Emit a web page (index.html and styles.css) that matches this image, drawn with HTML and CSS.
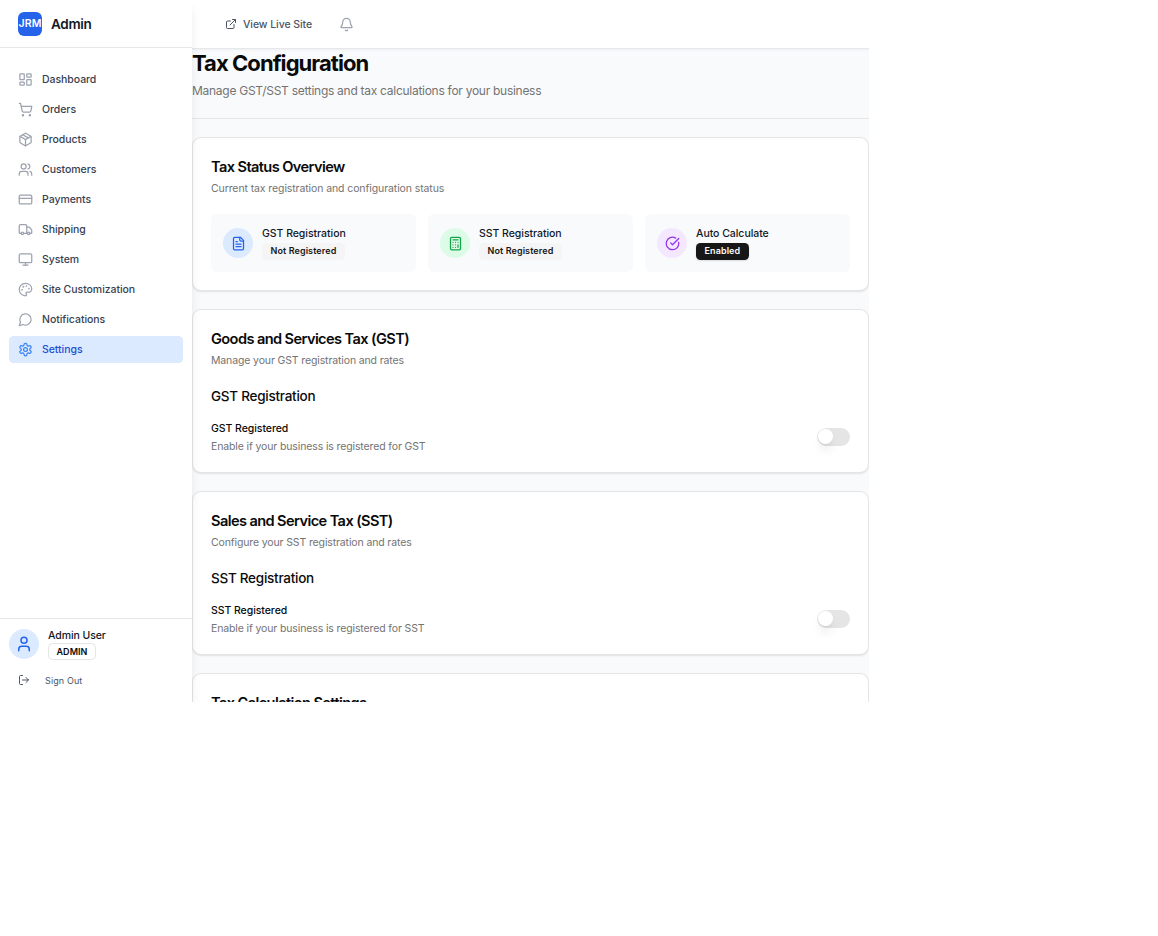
FILE: index.html
```html
<!DOCTYPE html>
<html lang="en">
<head>
<meta charset="utf-8">
<title>Tax Configuration</title>
<link rel="stylesheet" href="styles.css">
</head>
<body>
<div class="app">
  <aside class="sidebar">
    <div class="brand"><span class="logo">JRM</span><span class="brand-name">Admin</span></div>
    <nav class="nav">
      <a class="nav-item"><svg class="icon" viewBox="0 0 24 24"><rect width="7" height="9" x="3" y="3" rx="1"/><rect width="7" height="5" x="14" y="3" rx="1"/><rect width="7" height="9" x="14" y="12" rx="1"/><rect width="7" height="5" x="3" y="16" rx="1"/></svg><span>Dashboard</span></a>
      <a class="nav-item"><svg class="icon" viewBox="0 0 24 24"><circle cx="8" cy="21" r="1"/><circle cx="19" cy="21" r="1"/><path d="M2.05 2.05h2l2.66 12.42a2 2 0 0 0 2 1.58h9.78a2 2 0 0 0 1.95-1.57l1.65-7.43H5.12"/></svg><span>Orders</span></a>
      <a class="nav-item"><svg class="icon" viewBox="0 0 24 24"><path d="M11 21.73a2 2 0 0 0 2 0l7-4A2 2 0 0 0 21 16V8a2 2 0 0 0-1-1.73l-7-4a2 2 0 0 0-2 0l-7 4A2 2 0 0 0 3 8v8a2 2 0 0 0 1 1.73z"/><path d="M12 22V12"/><path d="m3.3 7 8.7 5 8.7-5"/><path d="m7.5 4.27 9 5.15"/></svg><span>Products</span></a>
      <a class="nav-item"><svg class="icon" viewBox="0 0 24 24"><path d="M16 21v-2a4 4 0 0 0-4-4H6a4 4 0 0 0-4 4v2"/><circle cx="9" cy="7" r="4"/><path d="M22 21v-2a4 4 0 0 0-3-3.87"/><path d="M16 3.13a4 4 0 0 1 0 7.75"/></svg><span>Customers</span></a>
      <a class="nav-item"><svg class="icon" viewBox="0 0 24 24"><rect width="20" height="14" x="2" y="5" rx="2"/><path d="M2 10h20"/></svg><span>Payments</span></a>
      <a class="nav-item"><svg class="icon" viewBox="0 0 24 24"><path d="M14 18V6a2 2 0 0 0-2-2H4a2 2 0 0 0-2 2v11a1 1 0 0 0 1 1h2"/><path d="M15 18H9"/><path d="M19 18h2a1 1 0 0 0 1-1v-3.65a1 1 0 0 0-.22-.62l-3.48-4.35A1 1 0 0 0 17.52 8H14"/><circle cx="17" cy="18" r="2"/><circle cx="7" cy="18" r="2"/></svg><span>Shipping</span></a>
      <a class="nav-item"><svg class="icon" viewBox="0 0 24 24"><rect width="20" height="14" x="2" y="3" rx="2"/><path d="M8 21h8"/><path d="M12 17v4"/></svg><span>System</span></a>
      <a class="nav-item"><svg class="icon" viewBox="0 0 24 24"><circle class="dot" cx="13.5" cy="6.5" r=".5"/><circle class="dot" cx="17.5" cy="10.5" r=".5"/><circle class="dot" cx="8.5" cy="7.5" r=".5"/><circle class="dot" cx="6.5" cy="12.5" r=".5"/><path d="M12 2C6.5 2 2 6.5 2 12s4.5 10 10 10c.926 0 1.648-.746 1.648-1.688 0-.437-.18-.835-.437-1.125-.29-.289-.438-.652-.438-1.125a1.64 1.64 0 0 1 1.668-1.668h1.996c3.051 0 5.555-2.503 5.555-5.554C21.965 6.012 17.461 2 12 2z"/></svg><span>Site Customization</span></a>
      <a class="nav-item"><svg class="icon" viewBox="0 0 24 24"><path d="M7.9 20A9 9 0 1 0 4 16.1L2 22Z"/></svg><span>Notifications</span></a>
      <a class="nav-item active"><svg class="icon" viewBox="0 0 24 24"><path d="M12.22 2h-.44a2 2 0 0 0-2 2v.18a2 2 0 0 1-1 1.73l-.43.25a2 2 0 0 1-2 0l-.15-.08a2 2 0 0 0-2.73.73l-.22.38a2 2 0 0 0 .73 2.73l.15.1a2 2 0 0 1 1 1.72v.51a2 2 0 0 1-1 1.74l-.15.09a2 2 0 0 0-.73 2.73l.22.38a2 2 0 0 0 2.73.73l.15-.08a2 2 0 0 1 2 0l.43.25a2 2 0 0 1 1 1.73V20a2 2 0 0 0 2 2h.44a2 2 0 0 0 2-2v-.18a2 2 0 0 1 1-1.73l.43-.25a2 2 0 0 1 2 0l.15.08a2 2 0 0 0 2.73-.73l.22-.39a2 2 0 0 0-.73-2.73l-.15-.08a2 2 0 0 1-1-1.74v-.5a2 2 0 0 1 1-1.74l.15-.09a2 2 0 0 0 .73-2.73l-.22-.38a2 2 0 0 0-2.73-.73l-.15.08a2 2 0 0 1-2 0l-.43-.25a2 2 0 0 1-1-1.73V4a2 2 0 0 0-2-2z"/><circle cx="12" cy="12" r="3"/></svg><span>Settings</span></a>
    </nav>
    <div class="account">
      <div class="user">
        <span class="avatar"><svg class="icon" viewBox="0 0 24 24"><path d="M19 21v-2a4 4 0 0 0-4-4H9a4 4 0 0 0-4 4v2"/><circle cx="12" cy="7" r="4"/></svg></span>
        <div class="user-info"><span class="user-name">Admin User</span><span class="badge outline">ADMIN</span></div>
      </div>
      <a class="sign-out"><svg class="icon" viewBox="0 0 24 24"><path d="M9 21H5a2 2 0 0 1-2-2V5a2 2 0 0 1 2-2h4"/><path d="m16 17 5-5-5-5"/><path d="M21 12H9"/></svg><span>Sign Out</span></a>
    </div>
  </aside>
  <div class="main">
    <header class="topbar">
      <a class="live"><svg class="icon" viewBox="0 0 24 24"><path d="M15 3h6v6"/><path d="M10 14 21 3"/><path d="M18 13v6a2 2 0 0 1-2 2H5a2 2 0 0 1-2-2V8a2 2 0 0 1 2-2h6"/></svg><span>View Live Site</span></a>
      <svg class="icon bell" viewBox="0 0 24 24"><path d="M10.268 21a2 2 0 0 0 3.464 0"/><path d="M3.262 15.326A1 1 0 0 0 4 17h16a1 1 0 0 0 .74-1.673C19.41 13.956 18 12.499 18 8A6 6 0 0 0 6 8c0 4.499-1.411 5.956-2.738 7.326"/></svg>
    </header>
    <div class="page-head">
      <h1>Tax Configuration</h1>
      <p>Manage GST/SST settings and tax calculations for your business</p>
    </div>
    <div class="cards">
      <section class="card overview">
        <h2>Tax Status Overview</h2>
        <p class="desc">Current tax registration and configuration status</p>
        <div class="tiles">
          <div class="tile">
            <span class="bubble blue"><svg class="icon" viewBox="0 0 24 24"><path d="M15 2H6a2 2 0 0 0-2 2v16a2 2 0 0 0 2 2h12a2 2 0 0 0 2-2V7Z"/><path d="M14 2v4a2 2 0 0 0 2 2h4"/><path d="M10 9H8"/><path d="M16 13H8"/><path d="M16 17H8"/></svg></span>
            <div class="tile-info"><span class="tile-label">GST Registration</span><span class="badge muted">Not Registered</span></div>
          </div>
          <div class="tile">
            <span class="bubble green"><svg class="icon" viewBox="0 0 24 24"><rect width="16" height="20" x="4" y="2" rx="2"/><path d="M8 6h8"/><path d="M16 14v4"/><path d="M16 10h.01"/><path d="M12 10h.01"/><path d="M8 10h.01"/><path d="M12 14h.01"/><path d="M8 14h.01"/><path d="M12 18h.01"/><path d="M8 18h.01"/></svg></span>
            <div class="tile-info"><span class="tile-label">SST Registration</span><span class="badge muted">Not Registered</span></div>
          </div>
          <div class="tile">
            <span class="bubble purple"><svg class="icon" viewBox="0 0 24 24"><path d="M21.801 10A10 10 0 1 1 17 3.335"/><path d="m9 11 3 3L22 4"/></svg></span>
            <div class="tile-info"><span class="tile-label">Auto Calculate</span><span class="badge dark">Enabled</span></div>
          </div>
        </div>
      </section>
      <section class="card">
        <h2>Goods and Services Tax (GST)</h2>
        <p class="desc">Manage your GST registration and rates</p>
        <h3>GST Registration</h3>
        <div class="setting">
          <div><span class="setting-label">GST Registered</span><p class="desc hint">Enable if your business is registered for GST</p></div>
          <span class="switch"><span class="thumb"></span></span>
        </div>
      </section>
      <section class="card">
        <h2>Sales and Service Tax (SST)</h2>
        <p class="desc">Configure your SST registration and rates</p>
        <h3>SST Registration</h3>
        <div class="setting">
          <div><span class="setting-label">SST Registered</span><p class="desc hint">Enable if your business is registered for SST</p></div>
          <span class="switch"><span class="thumb"></span></span>
        </div>
      </section>
      <section class="card">
        <h2>Tax Calculation Settings</h2>
      </section>
    </div>
  </div>
</div>
</body>
</html>
```

FILE: styles.css
```css
* { box-sizing: border-box; }
body { margin: 0; background: #fff; font-family: Inter, "Liberation Sans", sans-serif; color: #0a0a0a; -webkit-font-smoothing: antialiased; }
h1, h2, h3, p { margin: 0; }
.icon { width: 15px; height: 15px; flex: none; fill: none; stroke: currentColor; stroke-width: 2; stroke-linecap: round; stroke-linejoin: round; }
.dot { fill: currentColor; }
.app { display: flex; width: 869px; height: 702px; overflow: hidden; background: #f9fafb; }

.sidebar { position: relative; z-index: 2; display: flex; flex-direction: column; width: 192px; flex: none; background: #fff; box-shadow: 0 7.5px 11px -2px rgba(0,0,0,.1), 0 3px 4.5px -3px rgba(0,0,0,.1); }
.brand { display: flex; align-items: center; gap: 9px; height: 48px; padding: 0 18px; border-bottom: 1px solid #e5e7eb; }
.logo { display: flex; align-items: center; justify-content: center; width: 24px; height: 24px; border-radius: 6px; background: #2563eb; color: #fff; font-size: 10.5px; font-weight: 600; letter-spacing: .1px; }
.brand-name { font-size: 13.5px; font-weight: 600; letter-spacing: -.3px; color: #111827; }
.nav { flex: 1; display: flex; flex-direction: column; gap: 3px; padding: 18px 9px; }
.nav-item { display: flex; align-items: center; gap: 9px; height: 27px; padding: 0 9px; border-radius: 4.5px; font-size: 10.5px; font-weight: 500; letter-spacing: -.05px; color: #374151; }
.nav-item .icon { color: #9ca3af; }
.nav-item.active { background: #dbeafe; color: #1d4ed8; }
.nav-item.active .icon { color: #3b82f6; }
.account { height: 84px; border-top: 1px solid #e5e7eb; padding: 8px 9px; }
.user { display: flex; align-items: center; gap: 9px; height: 33px; }
.avatar, .bubble { display: flex; align-items: center; justify-content: center; width: 30px; height: 30px; flex: none; border-radius: 50%; background: #dbeafe; color: #2563eb; }
.avatar .icon { width: 18px; height: 18px; }
.user-info, .tile-info { display: flex; flex-direction: column; align-items: flex-start; }
.user-name { font-size: 10.5px; line-height: 15px; font-weight: 500; letter-spacing: -.08px; color: #111827; }
.badge { height: 17px; padding: 0 7.5px; border: 1px solid transparent; border-radius: 4.5px; font-size: 9px; line-height: 14px; font-weight: 600; letter-spacing: .1px; }
.outline { border-color: #e5e5e5; line-height: 15px; letter-spacing: .06px; }
.muted { background: #f5f5f5; color: #171717; }
.dark { background: #171717; color: #fafafa; box-shadow: 0 1px 2px rgba(0,0,0,.12); }
.sign-out { display: flex; align-items: center; gap: 15px; height: 24px; margin-top: 8px; padding-left: 9px; font-size: 9px; letter-spacing: .12px; color: #4b5563; }
.sign-out .icon { width: 12px; height: 12px; }

.main { flex: 1; min-width: 0; }
.topbar { display: flex; align-items: center; gap: 27px; height: 49px; padding-left: 33px; background: #fff; border-bottom: 1px solid #e5e7eb; box-shadow: 0 1px 2px rgba(0,0,0,.05); }
.live { display: flex; align-items: center; gap: 6px; font-size: 10.5px; font-weight: 500; letter-spacing: -.07px; color: #4b5563; }
.live .icon { width: 12px; height: 12px; }
.bell { color: #9ca3af; }
.page-head { height: 70px; border-bottom: 1px solid #e5e5e5; }
h1 { font-size: 22px; line-height: 28px; font-weight: 700; letter-spacing: -.95px; }
.page-head p { margin-top: 5px; font-size: 12px; line-height: 18px; letter-spacing: -.275px; color: #737373; }
.cards { display: flex; flex-direction: column; gap: 18px; padding-top: 18px; }
.card { height: 164px; flex: none; padding: 17px 18px; border: 1px solid #e5e5e5; border-radius: 9px; background: #fff; box-shadow: 0 1px 2px rgba(0,0,0,.1); }
.overview { height: 154px; }
h2 { font-size: 14.6px; line-height: 25px; font-weight: 600; letter-spacing: -.6px; }
.desc { margin-top: 1px; font-size: 10.5px; line-height: 15px; letter-spacing: -.13px; color: #737373; }
.overview .desc { letter-spacing: -.1px; }
.tiles { display: grid; grid-template-columns: repeat(3, 1fr); gap: 12px; margin-top: 18px; }
.tile { display: flex; align-items: center; gap: 9px; height: 58px; padding: 12px; border-radius: 6px; background: #f9fafb; }
.tile-label { font-size: 10.5px; line-height: 15px; margin-bottom: 2px; font-weight: 500; letter-spacing: -.04px; color: #111827; }
.green { background: #dcfce7; color: #16a34a; }
.purple { background: #f3e8ff; color: #9333ea; }
h3 { margin-top: 18px; font-size: 13.5px; line-height: 21px; font-weight: 500; letter-spacing: -.26px; }
.setting { display: flex; align-items: center; justify-content: space-between; margin-top: 14px; height: 32px; }
.setting-label { display: block; font-size: 10.5px; line-height: 15px; font-weight: 500; letter-spacing: -.06px; }
.hint { margin-top: 3px; }
.switch { width: 33px; height: 18px; padding: 1px; border-radius: 9px; background: #e5e5e5; }
.thumb { display: block; width: 15px; height: 15px; border-radius: 50%; background: #fff; box-shadow: 0 7.5px 11px -2px rgba(0,0,0,.1), 0 3px 4.5px -3px rgba(0,0,0,.1); }
```
